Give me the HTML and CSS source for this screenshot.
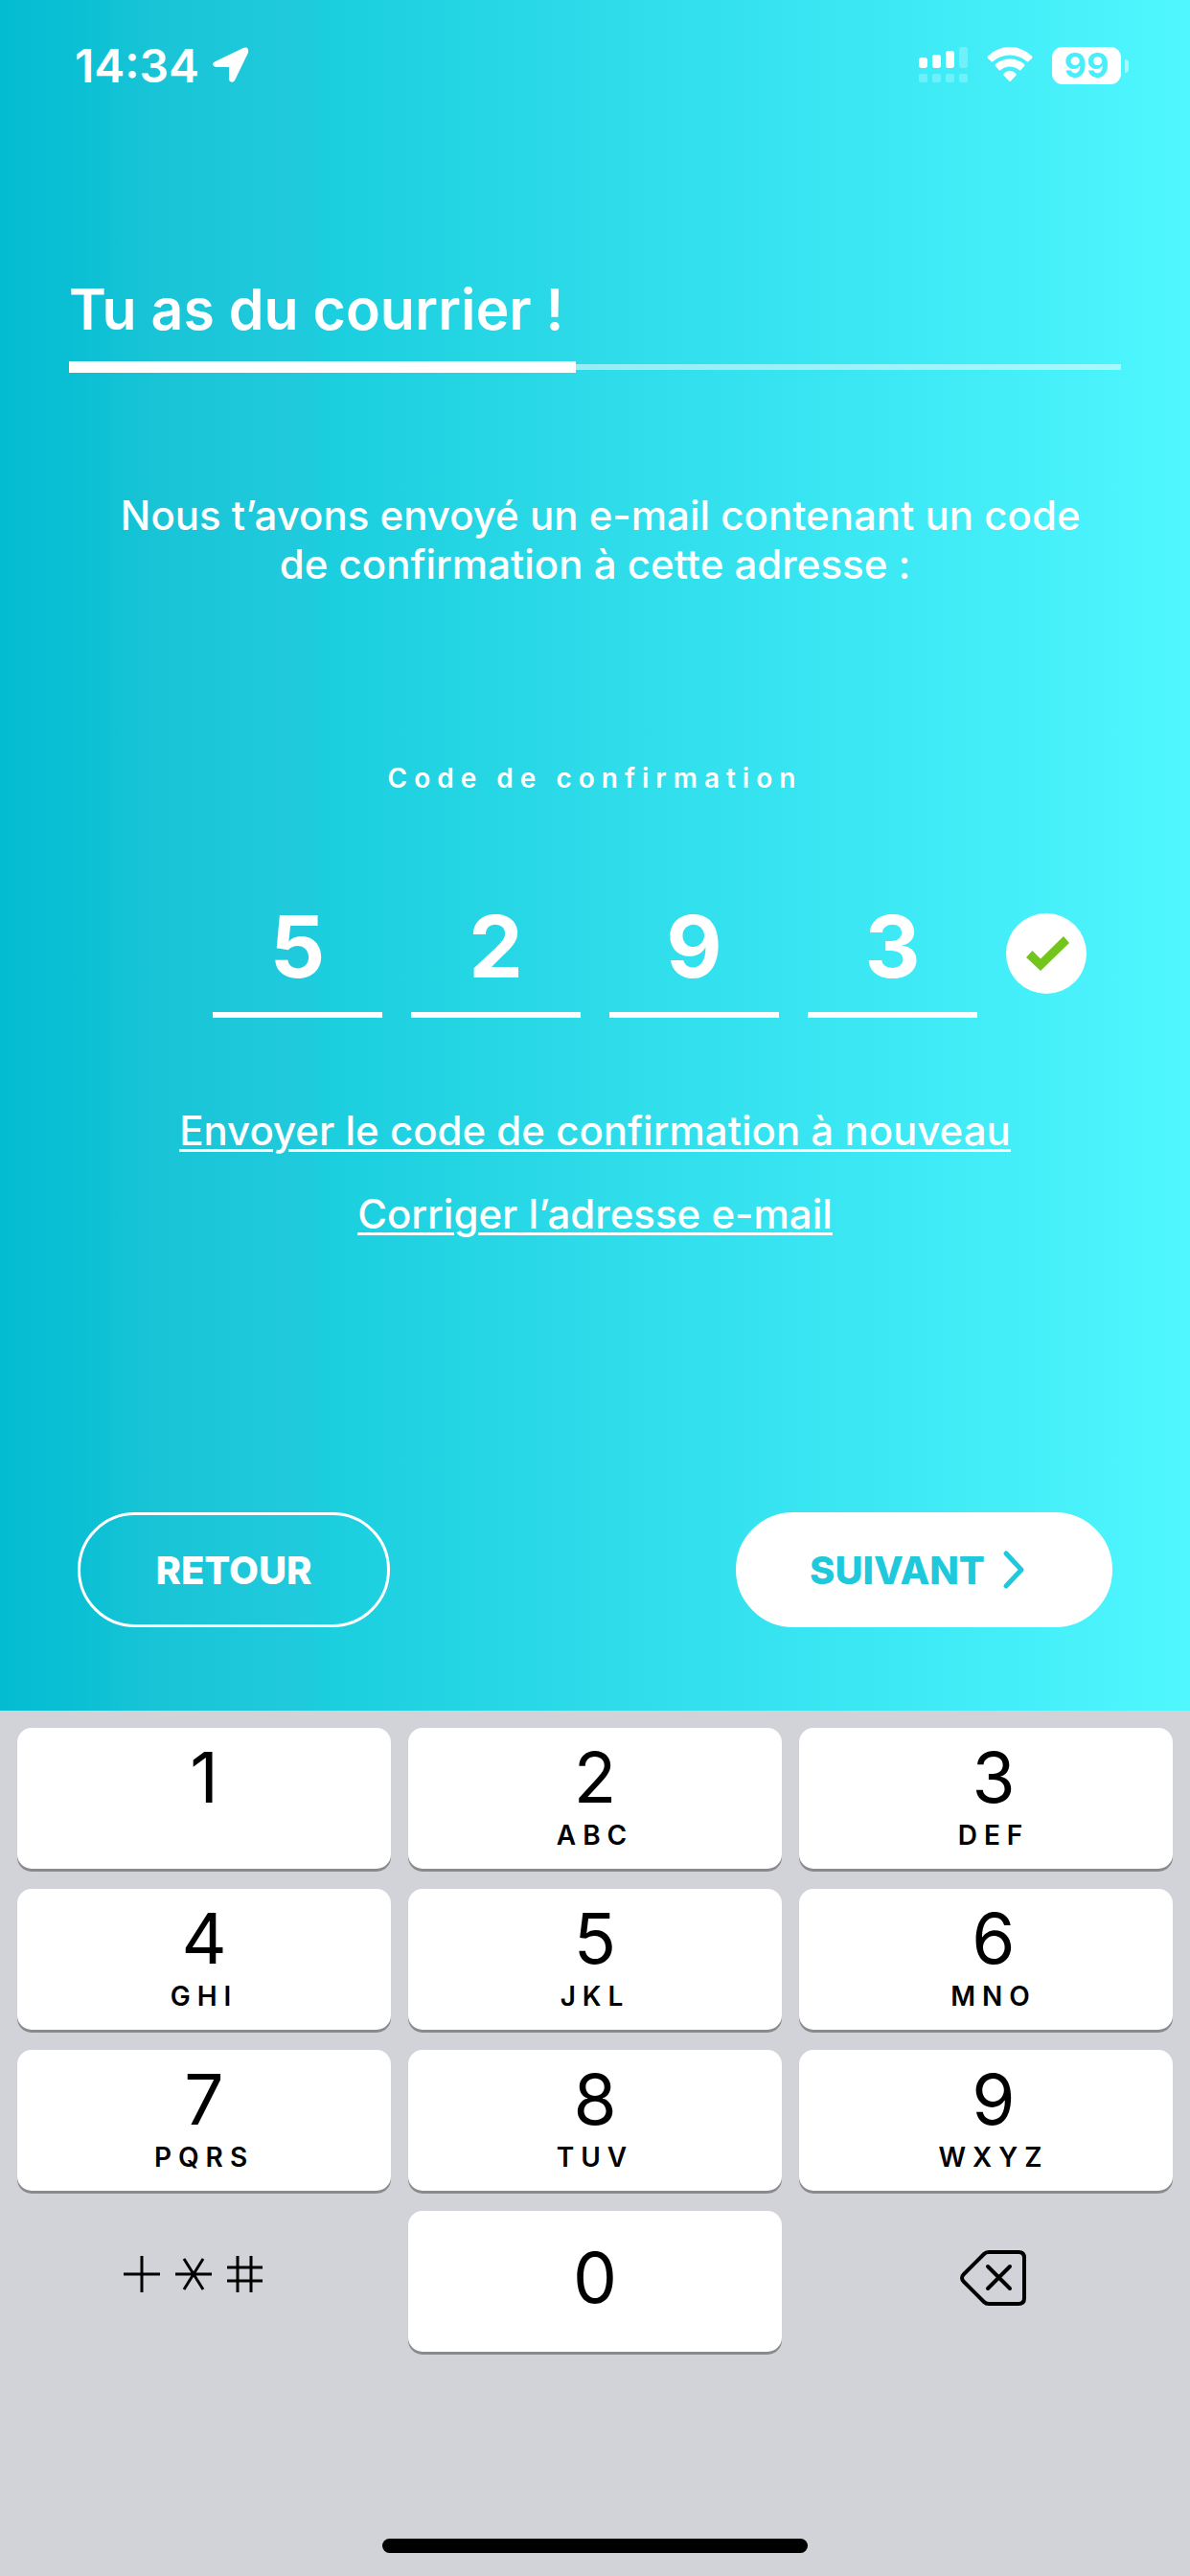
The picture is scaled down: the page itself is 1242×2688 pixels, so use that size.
FILE: index.html
```
<!DOCTYPE html>
<html lang="fr">
<head>
  <meta charset="UTF-8">
  <meta name="viewport" content="width=device-width, initial-scale=1">
  <title>Tu as du courrier !</title>
  <link rel="stylesheet" href="styles.css">
</head>
<body>

  <main class="screen">
    <div class="status-bar">
      <div class="status-left">
        <span class="time">14:34</span>
        <svg width="38" height="38" viewBox="0 0 38 38" aria-hidden="true">
          <path d="M3 15 L32 1 Q38 -1 37 6 L23 35 Q21 38 18 36 Q17 35 17 33 V21 H4 Q1 21 0 18 Q0 16 3 15Z" fill="#fff"/>
        </svg>
      </div>
      <div class="status-right">
        <svg width="51" height="38" viewBox="0 0 51 38" fill="#fff" aria-hidden="true">
          <rect x="0" y="11" width="9" height="11" rx="3"/>
          <rect x="14" y="8" width="9" height="14" rx="3"/>
          <rect x="28" y="4" width="9" height="18" rx="3"/>
          <g opacity="0.25">
            <rect x="42" y="0" width="9" height="22" rx="3"/>
            <rect x="0" y="28" width="9" height="9" rx="2"/>
            <rect x="14" y="28" width="9" height="9" rx="2"/>
            <rect x="28" y="28" width="9" height="9" rx="2"/>
            <rect x="42" y="28" width="9" height="9" rx="2"/>
          </g>
        </svg>
        <svg width="48" height="38" viewBox="0 0 48 38" fill="#fff" aria-hidden="true">
          <path d="M1 9.5 Q11 0 24 0 Q37 0 47 9.5 Q48 11 47 12 L43.5 15 Q42.5 16 41.5 15 Q34 8.5 24 8.5 Q14 8.5 6.5 15 Q5.5 16 4.5 15 L1 12 Q0 11 1 9.5Z"/>
          <path d="M9 18 Q15.5 12.5 24 12.5 Q32.5 12.5 39 18 Q40 19 39 20 L35.5 24 Q34.5 25 33.5 24 Q29.5 20.5 24 20.5 Q18.5 20.5 14.5 24 Q13.5 25 12.5 24 L9 20 Q8 19 9 18Z"/>
          <path d="M17.5 28 Q20 25 24 25 Q28 25 30.5 28 Q31 29 30.5 29.5 L25 35.5 Q24 36.5 23 35.5 L17.5 29.5 Q17 29 17.5 28Z"/>
        </svg>
        <div class="battery">99</div>
      </div>
    </div>

    <header class="header">
      <h1>Tu as du courrier !</h1>
      <div class="progress" role="progressbar" aria-label="Progression" aria-valuenow="48" aria-valuemin="0" aria-valuemax="100">
        <div class="progress-value"></div>
      </div>
    </header>

    <p class="intro">&nbsp;Nous t’avons envoyé un e-mail contenant un code de confirmation à cette adresse :</p>

    <form class="code-form">
      <label class="code-label" for="code-1">Code de confirmation</label>
      <div class="code-row">
        <div class="code-inputs">
          <input id="code-1" type="text" inputmode="numeric" maxlength="1" value="5">
          <input id="code-2" type="text" inputmode="numeric" maxlength="1" value="2" aria-label="Code de confirmation, chiffre 2">
          <input id="code-3" type="text" inputmode="numeric" maxlength="1" value="9" aria-label="Code de confirmation, chiffre 3">
          <input id="code-4" type="text" inputmode="numeric" maxlength="1" value="3" aria-label="Code de confirmation, chiffre 4">
        </div>
        <svg class="check" width="84" height="84" viewBox="0 0 84 84" aria-hidden="true">
          <circle cx="42" cy="42" r="42" fill="#fff"/>
          <path d="M21 46 L27.5 39 L36 47.5 L60 24 L66 31 L36 60Z" fill="#73c51b"/>
        </svg>
      </div>
    </form>

    <div class="links">
      <a href="#">Envoyer le code de confirmation à nouveau</a>
      <a href="#">Corriger l’adresse e-mail</a>
    </div>

    <div class="actions">
      <button class="btn btn-back" type="button">RETOUR</button>
      <button class="btn btn-next" type="button">
        SUIVANT
        <svg width="24" height="42" viewBox="0 0 24 42" fill="none" stroke="#20c8dc" stroke-width="5" stroke-linecap="round" stroke-linejoin="round" aria-hidden="true">
          <path d="M4 4 L20 21 L4 38"/>
        </svg>
      </button>
    </div>
  </main>

  <section class="keyboard" aria-label="Clavier numérique">
    <div class="keys">
      <button class="key" type="button"><span class="num">1</span></button>
      <button class="key" type="button"><span class="num">2</span><span class="abc">ABC</span></button>
      <button class="key" type="button"><span class="num">3</span><span class="abc">DEF</span></button>
      <button class="key" type="button"><span class="num">4</span><span class="abc">GHI</span></button>
      <button class="key" type="button"><span class="num">5</span><span class="abc">JKL</span></button>
      <button class="key" type="button"><span class="num">6</span><span class="abc">MNO</span></button>
      <button class="key" type="button"><span class="num">7</span><span class="abc">PQRS</span></button>
      <button class="key" type="button"><span class="num">8</span><span class="abc">TUV</span></button>
      <button class="key" type="button"><span class="num">9</span><span class="abc">WXYZ</span></button>
      <button class="key key-plain key-symbols" type="button" aria-label="Symboles">
        <svg width="146" height="40" viewBox="0 0 146 40" fill="none" stroke="#000" stroke-width="3" aria-hidden="true">
          <path d="M0 20 H38 M19 1 V39"/>
          <path d="M54 20 H92 M63 4 L83 36 M83 4 L63 36"/>
          <path d="M108 13 H145 M108 27 H145 M119 1 V39 M133 1 V39"/>
        </svg>
      </button>
      <button class="key key-zero" type="button"><span class="num">0</span></button>
      <button class="key key-plain key-delete" type="button" aria-label="Effacer">
        <svg width="70" height="60" viewBox="0 0 70 60" fill="none" stroke="#000" stroke-width="4" stroke-linecap="round" stroke-linejoin="round" aria-hidden="true">
          <path d="M30 3 H61 Q67 3 67 9 V51 Q67 57 61 57 H30 Q27 57 25 55 L4 34 Q0 30 4 26 L25 5 Q27 3 30 3Z"/>
          <path d="M29 18 L52 41 M52 18 L29 41"/>
        </svg>
      </button>
    </div>
    <div class="home-bar"></div>
  </section>

</body>
</html>
```

FILE: styles.css
```
* {
  box-sizing: border-box;
}

body {
  margin: 0;
  min-height: 100vh;
  display: flex;
  flex-direction: column;
  font-family: Inter, sans-serif;
  color: #fff;
}

.screen {
  flex: 1;
  display: flex;
  flex-direction: column;
  padding-bottom: 87px;
  background: linear-gradient(90deg, #04bcd2 0%, #0abfd4 6%, #18c4d6 13%, #20cadc 25%, #1bcfde 28%, #2fdcea 52%, #3ae7f3 72%, #50f7ff 100%);
}

/* Barre d'état */
.status-bar {
  display: flex;
  justify-content: space-between;
  align-items: center;
  height: 136px;
  padding: 0 64px 0 78px;
}

.status-left {
  display: flex;
  align-items: center;
  gap: 14px;
}

.time {
  font-size: 48px;
  font-weight: 600;
}

.status-right {
  display: flex;
  align-items: center;
  gap: 20px;
}

.battery {
  position: relative;
  width: 72px;
  height: 39px;
  margin-right: 8px;
  border-radius: 11px;
  background-color: #fff;
  color: #48effa;
  font-size: 36px;
  font-weight: 700;
  line-height: 39px;
  text-align: center;
}

.battery::after {
  content: "";
  position: absolute;
  top: 13px;
  right: -8px;
  width: 4px;
  height: 14px;
  border-radius: 0 4px 4px 0;
  background-color: rgba(255, 255, 255, 0.5);
}

/* Titre et progression */
.header {
  padding: 153px 72px 0;
}

h1 {
  margin: 0 0 20px;
  font-size: 59px;
  font-weight: 600;
  line-height: 68px;
}

.progress {
  display: flex;
  align-items: center;
  height: 12px;
}

.progress::after {
  content: "";
  flex: 1;
  height: 6px;
  background-color: rgba(255, 255, 255, 0.5);
}

.progress-value {
  width: 48.2%;
  height: 12px;
  background-color: #fff;
}

.intro {
  margin: 123px 100px 0;
  font-size: 42px;
  font-weight: 500;
  line-height: 51px;
  text-align: center;
}

/* Code */
.code-form {
  margin-top: 181px;
}

.code-label {
  display: block;
  font-size: 28px;
  font-weight: 600;
  line-height: 34px;
  letter-spacing: 7px;
  text-align: center;
}

.code-row {
  display: grid;
  grid-template-columns: 1fr auto 1fr;
  column-gap: 30px;
  align-items: center;
  margin-top: 104px;
}

.code-inputs {
  grid-column: 2;
  display: flex;
  gap: 30px;
}

.code-inputs input {
  width: 177px;
  height: 129px;
  padding: 0 0 14px;
  border: none;
  border-bottom: 6px solid #fff;
  border-radius: 0;
  background: none;
  color: #fff;
  font-family: inherit;
  font-size: 90px;
  font-weight: 700;
  text-align: center;
  outline: none;
}

.check {
  margin-bottom: 6px;
}

.links {
  display: flex;
  flex-direction: column;
  align-items: center;
  gap: 36px;
  margin-top: 92px;
}

.links a {
  color: #fff;
  font-size: 42px;
  font-weight: 500;
  line-height: 51px;
  text-decoration-thickness: 3px;
  text-underline-offset: 4px;
}

/* Boutons */
.actions {
  display: flex;
  justify-content: space-between;
  margin-top: auto;
  padding: 0 81px;
}

.btn {
  display: flex;
  align-items: center;
  justify-content: center;
  gap: 18px;
  height: 120px;
  border: 3px solid #fff;
  border-radius: 60px;
  font-family: inherit;
  font-size: 40px;
  font-weight: 800;
}

.btn-back {
  width: 326px;
  background: none;
  color: #fff;
}

.btn-next {
  width: 393px;
  padding-right: 20px;
  background-color: #fff;
  color: #20c8dc;
}

/* Clavier */
.keyboard {
  padding: 18px 18px 24px;
  background-color: #d2d3d8;
}

.keys {
  display: grid;
  grid-template-columns: repeat(3, 1fr);
  gap: 21px 18px;
}

.key {
  display: flex;
  flex-direction: column;
  align-items: center;
  height: 147px;
  padding: 9px 0 0;
  border: none;
  border-radius: 15px;
  background-color: #fff;
  box-shadow: 0 3px 0 #898a8d;
  color: #000;
  font-family: inherit;
}

.key:nth-child(3n) {
  padding-left: 16px;
}

.num {
  font-size: 73px;
  line-height: 86px;
}

.abc {
  font-size: 28px;
  font-weight: 600;
  line-height: 34px;
  letter-spacing: 7px;
}

.key-zero {
  justify-content: center;
  padding: 0 0 8px;
}

.key-plain {
  justify-content: center;
  padding: 0 0 8px;
  background: none;
  box-shadow: none;
}

.key-symbols {
  padding: 0 22px 16px 0;
}

.home-bar {
  width: 444px;
  height: 15px;
  margin: 195px auto 0;
  border-radius: 8px;
  background-color: #000;
}
```
